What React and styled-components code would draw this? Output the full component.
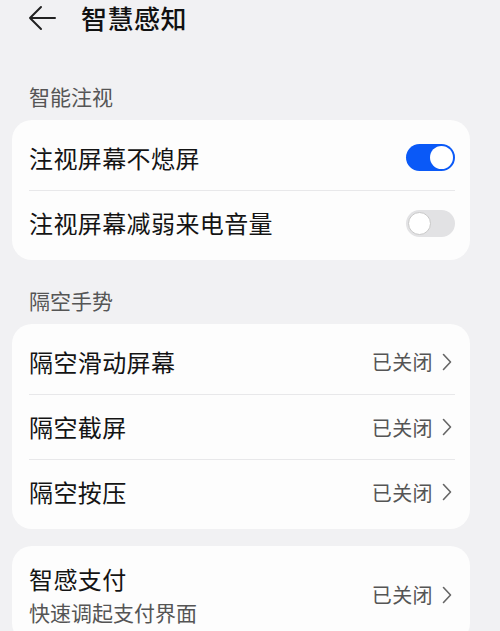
import React, { useState } from 'react';
import styled, { createGlobalStyle } from 'styled-components';

const GlobalStyle = createGlobalStyle`
    html, body {
        margin: 0;
        padding: 0;
        background: #f1f1f3;
        font-family: 'Noto Sans CJK SC', 'Noto Sans', sans-serif;
    }
`;

const Page = styled.div`
    width: 500px;
    min-height: 631px;
    background: #f1f1f3;
    overflow: hidden;
`;

const TopBar = styled.div`
    height: 36px;
    display: flex;
    align-items: center;
    padding-left: 28px;
    gap: 25px;
    margin-bottom: 20px;
`;

const Title = styled.h1`
    margin: 0;
    font-size: 26px;
    font-weight: 500;
    color: #111;
    line-height: 36px;
    letter-spacing: 0.5px;
`;

const SectionHeader = styled.div`
    padding: 28px 29px 12px;
    font-size: 21px;
    line-height: 24px;
    color: #555;
`;

const Card = styled.div`
    margin: ${p => (p.$gap ? '17px' : '0')} 0 0 12px;
    width: 458px;
    background: #fdfdfd;
    border-radius: 20px;
    padding: 5px 0;
    box-sizing: border-box;
`;

const Row = styled.div`
    height: ${p => (p.$tall ? '87px' : '65px')};
    margin: 0 15px 0 17px;
    display: flex;
    align-items: center;
    justify-content: space-between;
    border-top: ${p => (p.$first ? 'none' : '1px solid #e8e8ea')};
    box-sizing: border-box;
`;

const Labels = styled.div`
    display: flex;
    flex-direction: column;
    gap: 5px;
`;

const Label = styled.span`
    font-size: 24px;
    letter-spacing: 0.4px;
    color: #141414;
    line-height: 30px;
`;

const SubLabel = styled.span`
    font-size: 21px;
    color: #555;
    line-height: 26px;
`;

const Right = styled.div`
    display: flex;
    align-items: center;
    gap: 9px;
    padding-right: 3px;
`;

const Status = styled.span`
    font-size: 20px;
    letter-spacing: 0.4px;
    color: #555;
`;

const Track = styled.button`
    width: 49px;
    height: 27px;
    border-radius: 14px;
    border: none;
    padding: 2px;
    box-sizing: border-box;
    background: ${p => (p.$on ? '#0a59f7' : '#e2e2e4')};
    display: flex;
    justify-content: ${p => (p.$on ? 'flex-end' : 'flex-start')};
    cursor: pointer;
`;

const Knob = styled.span`
    width: 23px;
    height: 23px;
    border-radius: 50%;
    background: #fff;
    box-sizing: border-box;
    border: ${p => (p.$on ? 'none' : '1px solid #c8c8c8')};
`;

const BackArrow = () => (
    <svg width="28" height="26" viewBox="0 0 28 26" fill="none">
        <path d="M27 13H2M13 2L2 13l11 11" stroke="#222" strokeWidth="2" strokeLinecap="round" strokeLinejoin="round" />
    </svg>
);

const Chevron = () => (
    <svg width="10" height="18" viewBox="0 0 10 18" fill="none">
        <path d="M1.5 1.5L8.5 9l-7 7.5" stroke="#666" strokeWidth="1.6" strokeLinecap="round" strokeLinejoin="round" />
    </svg>
);

const Toggle = ({ initial }) => {
    const [on, setOn] = useState(initial);
    return (
        <Track $on={on} onClick={() => setOn(!on)}>
            <Knob $on={on} />
        </Track>
    );
};

const LinkRow = ({ label, sub, first }) => (
    <Row $first={first} $tall={!!sub}>
        <Labels>
            <Label>{label}</Label>
            {sub && <SubLabel>{sub}</SubLabel>}
        </Labels>
        <Right>
            <Status>已关闭</Status>
            <Chevron />
        </Right>
    </Row>
);

const App = () => (
    <>
        <GlobalStyle />
        <Page>
            <TopBar>
                <BackArrow />
                <Title>智慧感知</Title>
            </TopBar>

            <SectionHeader>智能注视</SectionHeader>
            <Card>
                <Row $first>
                    <Label>注视屏幕不熄屏</Label>
                    <Toggle initial={true} />
                </Row>
                <Row>
                    <Label>注视屏幕减弱来电音量</Label>
                    <Toggle initial={false} />
                </Row>
            </Card>

            <SectionHeader>隔空手势</SectionHeader>
            <Card>
                <LinkRow first label="隔空滑动屏幕" />
                <LinkRow label="隔空截屏" />
                <LinkRow label="隔空按压" />
            </Card>

            <Card $gap>
                <LinkRow first label="智感支付" sub="快速调起支付界面" />
            </Card>
        </Page>
    </>
);

export default App;
